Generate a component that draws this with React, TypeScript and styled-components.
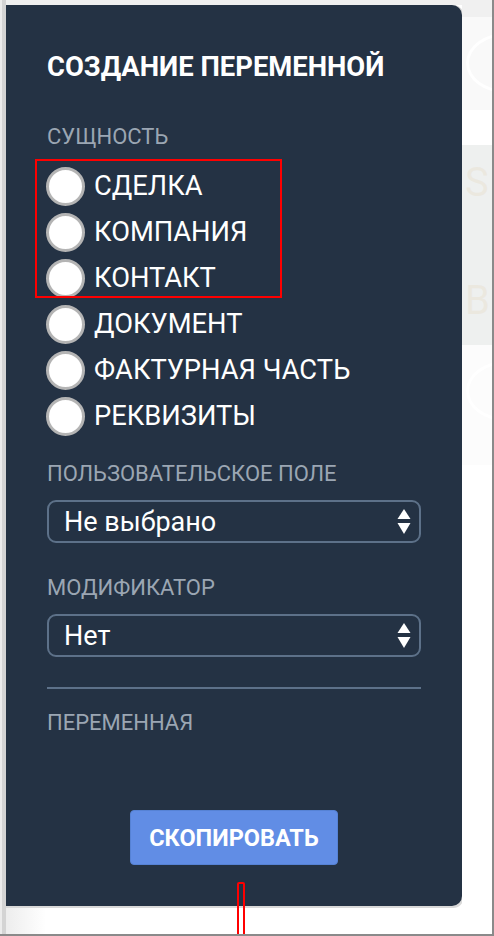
import React from 'react';
import styled, { createGlobalStyle } from 'styled-components';

const GlobalStyle = createGlobalStyle`
    html, body {
        margin: 0;
        padding: 0;
        background: #ffffff;
    }
    * {
        box-sizing: border-box;
    }
`;

const FONT = `Roboto, "Noto Sans", "Open Sans", sans-serif`;

const Page = styled.div`
    position: relative;
    width: 494px;
    height: 936px;
    display: flex;
    overflow: hidden;
    border-right: 2px solid #8a8a8a;
    border-bottom: 2px solid #8a8a8a;
    font-family: ${FONT};
`;

const LeftRail = styled.div`
    width: 6px;
    flex: none;
    background: linear-gradient(to right, #ececec 0 2px, #d4d4d4 2px);
`;

const Center = styled.div`
    width: 456px;
    flex: none;
    display: flex;
    flex-direction: column;
`;

const TopStrip = styled.div`
    height: 5px;
    flex: none;
    background: #f0f0f0;
`;

const BottomFill = styled.div`
    flex: 1;
    margin-top: 2px;
    background: linear-gradient(to right, #ededed, #ffffff 40px);
`;

const RightStrip = styled.div`
    flex: 1;
    display: flex;
    flex-direction: column;
    background: #ffffff;
`;

const StripBlock = styled.div<{ $h: number; $bg: string }>`
    height: ${({ $h }) => $h}px;
    flex: none;
    background: ${({ $bg }) => $bg};
    overflow: hidden;
    display: flex;
    flex-direction: column;
`;

const FaintLetter = styled.div<{ $top: number }>`
    margin-top: ${({ $top }) => $top}px;
    padding-left: 3px;
    color: rgba(225, 205, 170, 0.22);
    font-size: 40px;
    line-height: 40px;
`;

const FaintRing = styled.div<{ $top: number }>`
    width: 80px;
    height: 60px;
    margin-top: ${({ $top }) => $top}px;
    margin-left: 4px;
    border-radius: 50%;
    border: 3px solid rgba(255, 255, 255, 0.9);
    flex: none;
`;

const Panel = styled.div`
    height: 901px;
    flex: none;
    background: #243244;
    border-radius: 0 10px 10px 0;
    box-shadow: 1px 1px 0 1px #d9d9d9;
    padding: 46px 41px 0 41px;
    display: flex;
    flex-direction: column;
`;

const Title = styled.h1`
    margin: 0;
    color: #ffffff;
    font-size: 27.4px;
    font-weight: 700;
    line-height: 32px;
    white-space: nowrap;
`;

const Label = styled.div<{ $top: number }>`
    margin-top: ${({ $top }) => $top}px;
    color: #9ba6b3;
    font-size: 22px;
    line-height: 24px;
    text-transform: uppercase;
    white-space: nowrap;
`;

const RadioList = styled.div`
    display: flex;
    flex-direction: column;
    margin-top: 14px;
`;

const RadioRow = styled.label`
    display: flex;
    align-items: center;
    height: 46px;
    gap: 9px;
    color: #ffffff;
    font-size: 27.3px;
    text-transform: uppercase;
    white-space: nowrap;
    cursor: pointer;
`;

const RadioCircle = styled.span`
    width: 39px;
    height: 39px;
    flex: none;
    border-radius: 50%;
    background: #ffffff;
    border: 3px solid #b4b4b4;
    margin-left: -1px;
`;

const Select = styled.div`
    margin-top: 14px;
    height: 43px;
    flex: none;
    border: 2px solid #5d7189;
    border-radius: 9px;
    display: flex;
    align-items: center;
    justify-content: space-between;
    padding: 0 8px 0 15px;
    color: #ffffff;
    font-size: 27px;
`;

const Divider = styled.hr`
    margin: 30px 0 0 0;
    border: none;
    height: 2px;
    flex: none;
    background: #5d7189;
`;

const ButtonRow = styled.div`
    display: flex;
    justify-content: center;
    margin-top: 75px;
`;

const CopyButton = styled.button`
    width: 208px;
    height: 55px;
    border: 1px solid #5682d4;
    border-radius: 4px;
    background: #618de5;
    color: #ffffff;
    font-family: ${FONT};
    font-size: 23.5px;
    font-weight: 700;
    padding: 0;
    cursor: pointer;
`;

const Highlight = styled.div`
    position: absolute;
    left: 35px;
    top: 159px;
    width: 247px;
    height: 139px;
    border: 2px solid #ff0000;
    pointer-events: none;
`;

const Pin = styled.div`
    position: absolute;
    left: 237px;
    top: 882px;
    width: 8px;
    height: 60px;
    border: 2px solid #ff0000;
    border-radius: 2px;
    pointer-events: none;
`;

const Arrows = () => (
    <svg width="14" height="27" viewBox="0 0 14 27">
        <path d="M7 1 L13.5 11 H0.5 Z" fill="#ffffff" />
        <path d="M0.5 15 H13.5 L7 26 Z" fill="#ffffff" />
    </svg>
);

const entities = ['Сделка', 'Компания', 'Контакт', 'Документ', 'Фактурная часть', 'Реквизиты'];

export default function App() {
    return (
        <>
            <GlobalStyle />
            <Page>
                <LeftRail />
                <Center>
                    <TopStrip />
                    <Panel>
                        <Title>СОЗДАНИЕ ПЕРЕМЕННОЙ</Title>
                        <Label $top={42}>Сущность</Label>
                        <RadioList>
                            {entities.map(name => (
                                <RadioRow key={name}>
                                    <RadioCircle />
                                    {name}
                                </RadioRow>
                            ))}
                        </RadioList>
                        <Label $top={23}>Пользовательское поле</Label>
                        <Select>
                            Не выбрано
                            <Arrows />
                        </Select>
                        <Label $top={33}>Модификатор</Label>
                        <Select>
                            Нет
                            <Arrows />
                        </Select>
                        <Divider />
                        <Label $top={22}>Переменная</Label>
                        <ButtonRow>
                            <CopyButton>СКОПИРОВАТЬ</CopyButton>
                        </ButtonRow>
                    </Panel>
                    <BottomFill />
                </Center>
                <RightStrip>
                    <StripBlock $h={17} $bg="#f0f0f0" />
                    <StripBlock $h={93} $bg="#f9f9f9">
                        <FaintRing $top={16} />
                    </StripBlock>
                    <StripBlock $h={35} $bg="#ffffff" />
                    <StripBlock $h={200} $bg="#eef0ef">
                        <FaintLetter $top={18}>S</FaintLetter>
                        <FaintLetter $top={78}>B</FaintLetter>
                    </StripBlock>
                    <StripBlock $h={120} $bg="#fcfcfc">
                        <FaintRing $top={16} />
                    </StripBlock>
                </RightStrip>
                <Highlight />
                <Pin />
            </Page>
        </>
    );
}
